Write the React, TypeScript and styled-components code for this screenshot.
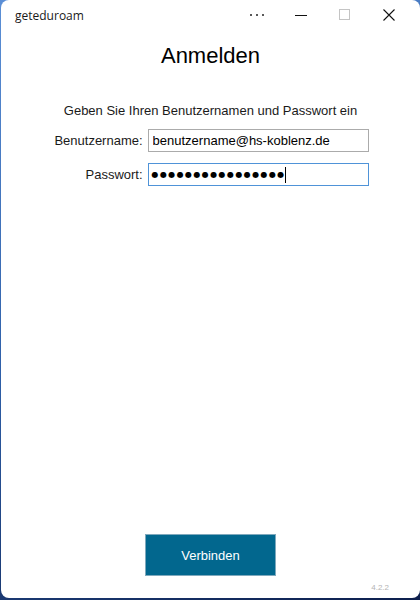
import React from 'react';
import styled, { createGlobalStyle } from 'styled-components';

const GlobalStyle = createGlobalStyle`
    html, body {
        margin: 0;
        padding: 0;
    }
    body {
        background: linear-gradient(160deg, #5b8fd6 0%, #2e5fa8 50%, #0d1f4d 100%);
        font-family: "Liberation Sans", Arial, sans-serif;
    }
`;

const Desktop = styled.div`
    width: 420px;
    height: 600px;
    display: flex;
    padding: 0 0 2px 1px;
    box-sizing: border-box;
`;

const Window = styled.div`
    flex: 1;
    display: flex;
    flex-direction: column;
    background: #ffffff;
    border-radius: 8px;
    overflow: hidden;
    color: #000000;
`;

const TitleBar = styled.div`
    height: 30px;
    display: flex;
    align-items: center;
    flex-shrink: 0;
    padding-right: 9px;
`;

const AppName = styled.span`
    flex: 1;
    padding-left: 14px;
    font-size: 12px;
    color: #1a1a1a;
    font-family: "Open Sans", "Liberation Sans", sans-serif;
`;

const CaptionButton = styled.button`
    width: 44px;
    height: 30px;
    border: none;
    background: transparent;
    padding: 0;
    display: flex;
    align-items: center;
    justify-content: center;
`;

const Content = styled.div`
    flex: 1;
    display: flex;
    flex-direction: column;
    align-items: center;
`;

const Heading = styled.h1`
    margin: 13px 0 0;
    font-size: 22px;
    line-height: 26px;
    font-weight: normal;
`;

const Hint = styled.p`
    margin: 34px 0 0;
    font-size: 13px;
    line-height: 16px;
    color: #1a1a1a;
`;

const Form = styled.div`
    margin-top: 10px;
    margin-left: 2px;
    display: grid;
    grid-template-columns: auto 221px;
    column-gap: 5px;
    row-gap: 11px;
    align-items: center;
`;

const Label = styled.label`
    font-size: 13px;
    text-align: right;
    color: #1a1a1a;
`;

const TextInput = styled.input`
    box-sizing: border-box;
    height: 23px;
    width: 100%;
    border: 1px solid #ababab;
    padding: 0 4px;
    font-family: "Liberation Sans", Arial, sans-serif;
    font-size: 13px;
    color: #000000;
    outline: none;
`;

const PasswordBox = styled.div<{ $focused?: boolean }>`
    box-sizing: border-box;
    height: 23px;
    border: 1px solid ${(p) => (p.$focused ? '#4f93d8' : '#ababab')};
    padding: 0 3px;
    display: flex;
    align-items: center;
`;

const Dots = styled.span`
    font-size: 8px;
    letter-spacing: 1.4px;
    line-height: 1;
    font-family: "DejaVu Sans", sans-serif;
`;

const Caret = styled.span`
    width: 1px;
    height: 16px;
    background: #000000;
    margin-left: -1px;
`;

const Spacer = styled.div`
    flex: 1;
`;

const ConnectButton = styled.button`
    width: 131px;
    height: 42px;
    border: 1px solid #7fa9bd;
    background: #02678e;
    color: #ffffff;
    font-family: "Liberation Sans", Arial, sans-serif;
    font-size: 13px;
    cursor: pointer;
`;

const Footer = styled.div`
    align-self: stretch;
    height: 22px;
    display: flex;
    align-items: center;
    justify-content: flex-end;
    padding-right: 31px;
`;

const Version = styled.span`
    font-size: 8px;
    color: #b4b4b4;
`;

const MoreIcon = () => (
    <svg width="16" height="4" viewBox="0 0 16 4">
        <circle cx="2" cy="2" r="1" fill="#222" />
        <circle cx="8" cy="2" r="1" fill="#222" />
        <circle cx="14" cy="2" r="1" fill="#222" />
    </svg>
);

const MinimizeIcon = () => (
    <svg width="12" height="12" viewBox="0 0 12 12">
        <line x1="0" y1="6.5" x2="12" y2="6.5" stroke="#111" strokeWidth="1" />
    </svg>
);

const MaximizeIcon = () => (
    <svg width="12" height="12" viewBox="0 0 12 12">
        <rect x="0.5" y="0.5" width="10" height="10" fill="none" stroke="#c4c4c4" strokeWidth="1" />
    </svg>
);

const CloseIcon = () => (
    <svg width="12" height="12" viewBox="0 0 12 12">
        <path d="M0.5 0.5 L11.5 11.5 M11.5 0.5 L0.5 11.5" stroke="#111" strokeWidth="1.1" />
    </svg>
);

const App: React.FC = () => {
    const [username, setUsername] = React.useState('benutzername@hs-koblenz.de');
    const passwordLength = 16;

    return (
        <Desktop>
            <GlobalStyle />
            <Window>
                <TitleBar>
                    <AppName>geteduroam</AppName>
                    <CaptionButton aria-label="Mehr">
                        <MoreIcon />
                    </CaptionButton>
                    <CaptionButton aria-label="Minimieren">
                        <MinimizeIcon />
                    </CaptionButton>
                    <CaptionButton aria-label="Maximieren">
                        <MaximizeIcon />
                    </CaptionButton>
                    <CaptionButton aria-label="Schließen">
                        <CloseIcon />
                    </CaptionButton>
                </TitleBar>
                <Content>
                    <Heading>Anmelden</Heading>
                    <Hint>Geben Sie Ihren Benutzernamen und Passwort ein</Hint>
                    <Form>
                        <Label htmlFor="user">Benutzername:</Label>
                        <TextInput
                            id="user"
                            value={username}
                            onChange={(e) => setUsername(e.target.value)}
                        />
                        <Label>Passwort:</Label>
                        <PasswordBox $focused>
                            <Dots>{'●'.repeat(passwordLength)}</Dots>
                            <Caret />
                        </PasswordBox>
                    </Form>
                    <Spacer />
                    <ConnectButton>Verbinden</ConnectButton>
                    <Footer>
                        <Version>4.2.2</Version>
                    </Footer>
                </Content>
            </Window>
        </Desktop>
    );
};

export default App;
